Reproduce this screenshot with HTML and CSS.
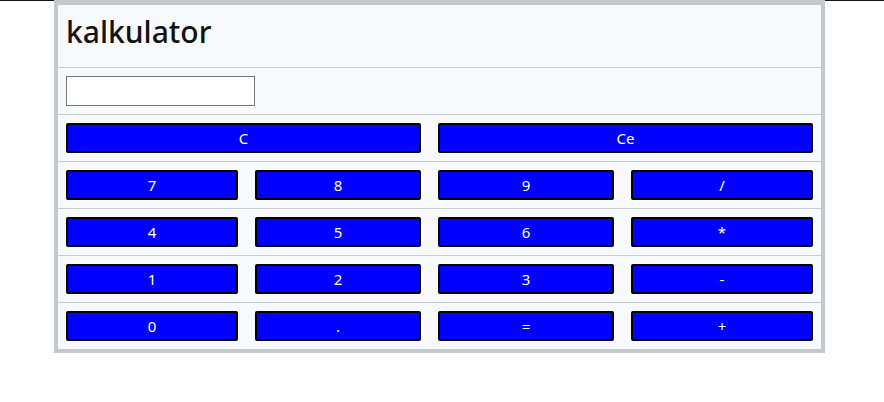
FILE: index.html
```html
<!DOCTYPE html>
<html lang="pl">
<head>
<meta charset="utf-8">
<title>kalkulator</title>
<link rel="stylesheet" href="styles.css">
</head>
<body>
<div class="topline"></div>
<div class="calc">
  <div class="row head"><h2 class="title">kalkulator</h2></div>
  <div class="row"><input class="display" type="text"></div>
  <div class="row keys">
    <button class="key wide">C</button>
    <button class="key wide">Ce</button>
  </div>
  <div class="row keys">
    <button class="key">7</button>
    <button class="key">8</button>
    <button class="key">9</button>
    <button class="key">/</button>
  </div>
  <div class="row keys">
    <button class="key">4</button>
    <button class="key">5</button>
    <button class="key">6</button>
    <button class="key">*</button>
  </div>
  <div class="row keys">
    <button class="key">1</button>
    <button class="key">2</button>
    <button class="key">3</button>
    <button class="key">-</button>
  </div>
  <div class="row keys last">
    <button class="key">0</button>
    <button class="key">.</button>
    <button class="key">=</button>
    <button class="key">+</button>
  </div>
</div>
</body>
</html>
```

FILE: styles.css
```css
html, body {
  margin: 0;
  padding: 0;
  background: #ffffff;
}
body {
  font-family: "Noto Sans", "Open Sans", sans-serif;
  font-size: 16px;
  line-height: 1.5;
  color: #212529;
}
.topline {
  height: 1px;
  background: #14141c;
}
.calc {
  margin: -1px 0 0 54px;
  width: 771px;
  box-sizing: border-box;
  border: 4px solid #c7c8ca;
  border-top-width: 5px;
  background: #f8f9fa;
}
.row {
  padding: 8px;
  border-bottom: 1px solid #c9cacc;
}
.row.last {
  border-bottom: none;
}
.title {
  margin: 0 0 8px 0;
  font-size: 30px;
  line-height: 38.4px;
  font-weight: 500;
  color: #111;
}
.display {
  display: block;
  box-sizing: border-box;
  width: 189px;
  height: 30px;
  margin: 0;
  border: 1px solid #767676;
  border-radius: 0;
  background: #fff;
  font: inherit;
  padding: 1px 2px;
}
.keys {
  display: grid;
  grid-template-columns: 172px 166px 176px 182px;
  column-gap: 17px;
}
.key {
  box-sizing: border-box;
  height: 30px;
  margin: 0;
  padding: 1px 6px;
  border: 2px solid #000;
  border-radius: 2px;
  background: #0000ff;
  color: #ffffff;
  font-family: "Noto Sans", "Open Sans", sans-serif;
  font-size: 15px;
  line-height: 24px;
  text-align: center;
}
.key.wide {
  grid-column: span 2;
}
```
